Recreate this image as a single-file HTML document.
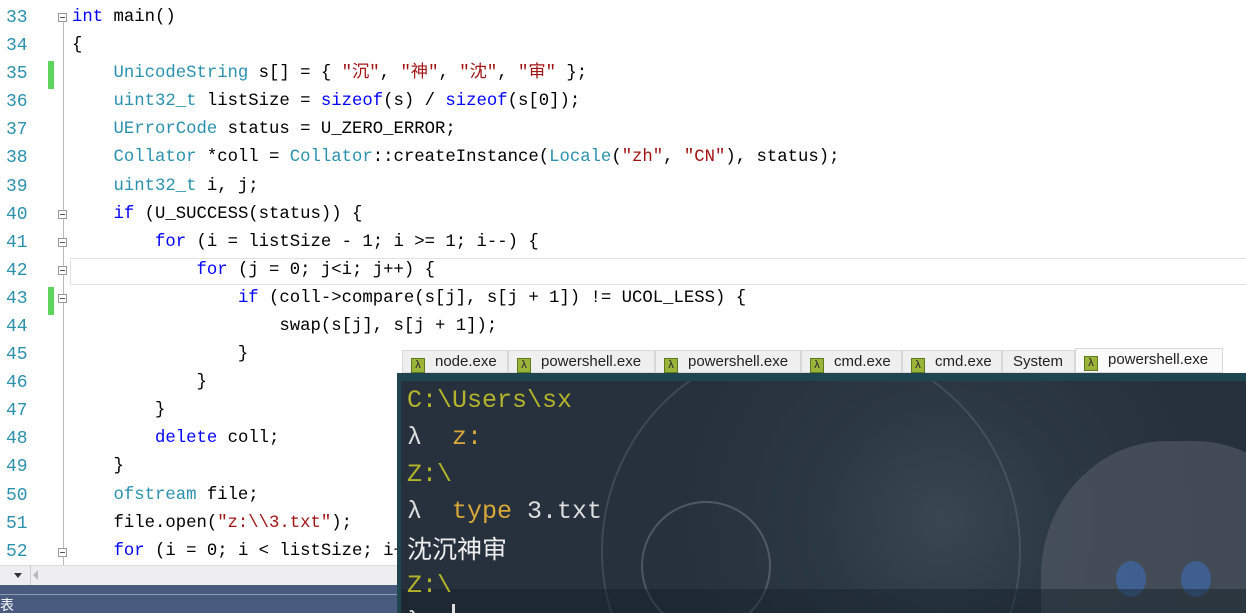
<!DOCTYPE html>
<html><head><meta charset="utf-8"><style>
*{margin:0;padding:0;box-sizing:border-box}
html,body{width:1246px;height:613px;overflow:hidden}
body{background:#fff;position:relative;font-family:"Liberation Mono","Noto Sans CJK SC",monospace}
.ln{position:absolute;left:6px;width:40px;color:#2b91af;font-size:18px;height:28px;line-height:28px}
.cl{position:absolute;left:72px;font-size:17.3px;height:28px;line-height:28px;white-space:pre;color:#000}
.t{color:#2b91af}.k{color:#0000ff}.s{color:#a31515}
.fold{position:absolute;left:58px;width:9px;height:9px;border:1px solid #999;background:#fff}
.fold:after{content:"";position:absolute;left:1px;top:3px;width:5px;height:1px;background:#555}
.g{position:absolute;left:48px;width:6px;height:28px;background:#5ed35e}
.tab{position:absolute;top:350px;height:23px;background:#efefef;border:1px solid #d8d8d8;font-family:"Liberation Sans",sans-serif;font-size:15px;line-height:22px;color:#222;padding-left:8px}
.tab i{display:inline-block;width:14px;height:15px;background:#9ab43a;border:1px solid #5d7a1a;color:#223;font-style:normal;font-size:11px;line-height:13px;text-align:center;vertical-align:-2px;margin-right:10px}
.tl{position:absolute;left:407px;font-size:25px;height:37px;line-height:37px;white-space:pre;color:#b4b42a}
</style></head><body>
<div style="position:absolute;left:63px;top:20px;width:1px;height:545px;background:#bbb"></div>
<div style="position:absolute;left:70px;top:258px;width:1176px;height:27px;border:1px solid #e2e2e2;border-right:none"></div>
<div class="g" style="top:61px"></div><div class="g" style="top:287px"></div>
<div class="fold" style="top:13px"></div><div class="fold" style="top:210px"></div><div class="fold" style="top:238px"></div><div class="fold" style="top:266px"></div><div class="fold" style="top:294px"></div><div class="fold" style="top:548px"></div>

<div class="ln" style="top:4px">33</div><div class="cl" style="top:4px"><span class="k">int</span> main()</div>
<div class="ln" style="top:32px">34</div><div class="cl" style="top:32px">{</div>
<div class="ln" style="top:60px">35</div><div class="cl" style="top:60px">    <span class="t">UnicodeString</span> s[] = { <span class="s">"沉"</span>, <span class="s">"神"</span>, <span class="s">"沈"</span>, <span class="s">"审"</span> };</div>
<div class="ln" style="top:88px">36</div><div class="cl" style="top:88px">    <span class="t">uint32_t</span> listSize = <span class="k">sizeof</span>(s) / <span class="k">sizeof</span>(s[0]);</div>
<div class="ln" style="top:116px">37</div><div class="cl" style="top:116px">    <span class="t">UErrorCode</span> status = U_ZERO_ERROR;</div>
<div class="ln" style="top:144px">38</div><div class="cl" style="top:144px">    <span class="t">Collator</span> *coll = <span class="t">Collator</span>::createInstance(<span class="t">Locale</span>(<span class="s">"zh"</span>, <span class="s">"CN"</span>), status);</div>
<div class="ln" style="top:173px">39</div><div class="cl" style="top:173px">    <span class="t">uint32_t</span> i, j;</div>
<div class="ln" style="top:201px">40</div><div class="cl" style="top:201px">    <span class="k">if</span> (U_SUCCESS(status)) {</div>
<div class="ln" style="top:229px">41</div><div class="cl" style="top:229px">        <span class="k">for</span> (i = listSize - 1; i >= 1; i--) {</div>
<div class="ln" style="top:257px">42</div><div class="cl" style="top:257px">            <span class="k">for</span> (j = 0; j&lt;i; j++) {</div>
<div class="ln" style="top:285px">43</div><div class="cl" style="top:285px">                <span class="k">if</span> (coll-&gt;compare(s[j], s[j + 1]) != UCOL_LESS) {</div>
<div class="ln" style="top:313px">44</div><div class="cl" style="top:313px">                    swap(s[j], s[j + 1]);</div>
<div class="ln" style="top:341px">45</div><div class="cl" style="top:341px">                }</div>
<div class="ln" style="top:369px">46</div><div class="cl" style="top:369px">            }</div>
<div class="ln" style="top:397px">47</div><div class="cl" style="top:397px">        }</div>
<div class="ln" style="top:425px">48</div><div class="cl" style="top:425px">        <span class="k">delete</span> coll;</div>
<div class="ln" style="top:453px">49</div><div class="cl" style="top:453px">    }</div>
<div class="ln" style="top:482px">50</div><div class="cl" style="top:482px">    <span class="t">ofstream</span> file;</div>
<div class="ln" style="top:510px">51</div><div class="cl" style="top:510px">    file.open(<span class="s">"z:\\3.txt"</span>);</div>
<div class="ln" style="top:538px">52</div><div class="cl" style="top:538px">    <span class="k">for</span> (i = 0; i &lt; listSize; i++</div>

<div style="position:absolute;left:0;top:565px;width:400px;height:20px;background:#eeeef0;border-top:1px solid #ddd"></div>
<div style="position:absolute;left:14px;top:573px;border:4px solid transparent;border-top:5px solid #333"></div>
<div style="position:absolute;left:30px;top:565px;width:1px;height:20px;background:#ccc"></div>
<div style="position:absolute;left:33px;top:570px;border:5px solid transparent;border-right:5px solid #bbb;border-left:none"></div>
<div style="position:absolute;left:0;top:585px;width:400px;height:28px;background:#485b7e"></div>
<div style="position:absolute;left:0;top:594px;width:400px;height:1px;background:#8c9ab3"></div>
<div style="position:absolute;left:0;top:596px;height:17px;overflow:hidden;color:#fff;font-size:14px;line-height:18px;font-family:'Noto Sans CJK SC',sans-serif">表</div>

<div class="tab" style="left:402px;width:106px"><i>λ</i>node.exe</div>
<div class="tab" style="left:508px;width:147px"><i>λ</i>powershell.exe</div>
<div class="tab" style="left:655px;width:146px"><i>λ</i>powershell.exe</div>
<div class="tab" style="left:801px;width:101px"><i>λ</i>cmd.exe</div>
<div class="tab" style="left:902px;width:100px"><i>λ</i>cmd.exe</div>
<div class="tab" style="left:1002px;width:73px;padding-left:10px">System</div>
<div class="tab" style="left:1075px;width:148px;top:348px;height:25px;background:#fafafa"><i>λ</i>powershell.exe</div>

<div style="position:absolute;left:397px;top:373px;width:849px;height:240px;background:radial-gradient(circle at 540px 140px,#3a4650 0,#2c3844 120px,#27313d 260px),#27313d;border-top:8px solid #1f4650;border-left:4px solid #1f4650;overflow:hidden">
 <div style="position:absolute;left:200px;top:-40px;width:420px;height:420px;border-radius:50%;border:2px solid rgba(150,170,190,.2)"></div>
 <div style="position:absolute;left:240px;top:120px;width:130px;height:130px;border-radius:50%;border:2px solid rgba(170,180,190,.3)"></div>
 <div style="position:absolute;left:640px;top:60px;width:280px;height:300px;border-radius:45%;background:rgba(90,96,106,.55)"></div>
 <div style="position:absolute;left:715px;top:180px;width:30px;height:36px;border-radius:50%;background:rgba(61,104,168,.7)"></div>
 <div style="position:absolute;left:780px;top:180px;width:30px;height:36px;border-radius:50%;background:rgba(61,104,168,.7)"></div>
 <div style="position:absolute;left:0;top:208px;width:849px;height:40px;background:rgba(20,30,40,.45)"></div>
</div>
<div class="tl" style="top:382px">C:\Users\sx</div>
<div class="tl" style="top:419px;color:#ddd">λ  <span style="color:#d8a838">z:</span></div>
<div class="tl" style="top:456px">Z:\</div>
<div class="tl" style="top:493px;color:#ddd">λ  <span style="color:#d8a838">type</span> 3.txt</div>
<div class="tl" style="top:530px;color:#eee;font-family:'Noto Sans CJK SC',sans-serif;font-size:25px">沈沉神审</div>
<div class="tl" style="top:567px">Z:\</div>
<div style="position:absolute;left:407px;top:603px;width:40px;height:10px;overflow:hidden;color:#ddd;font-size:25px;line-height:37px">λ</div>
<div style="position:absolute;left:452px;top:604px;width:3px;height:9px;background:#ddd"></div>
</body></html>
